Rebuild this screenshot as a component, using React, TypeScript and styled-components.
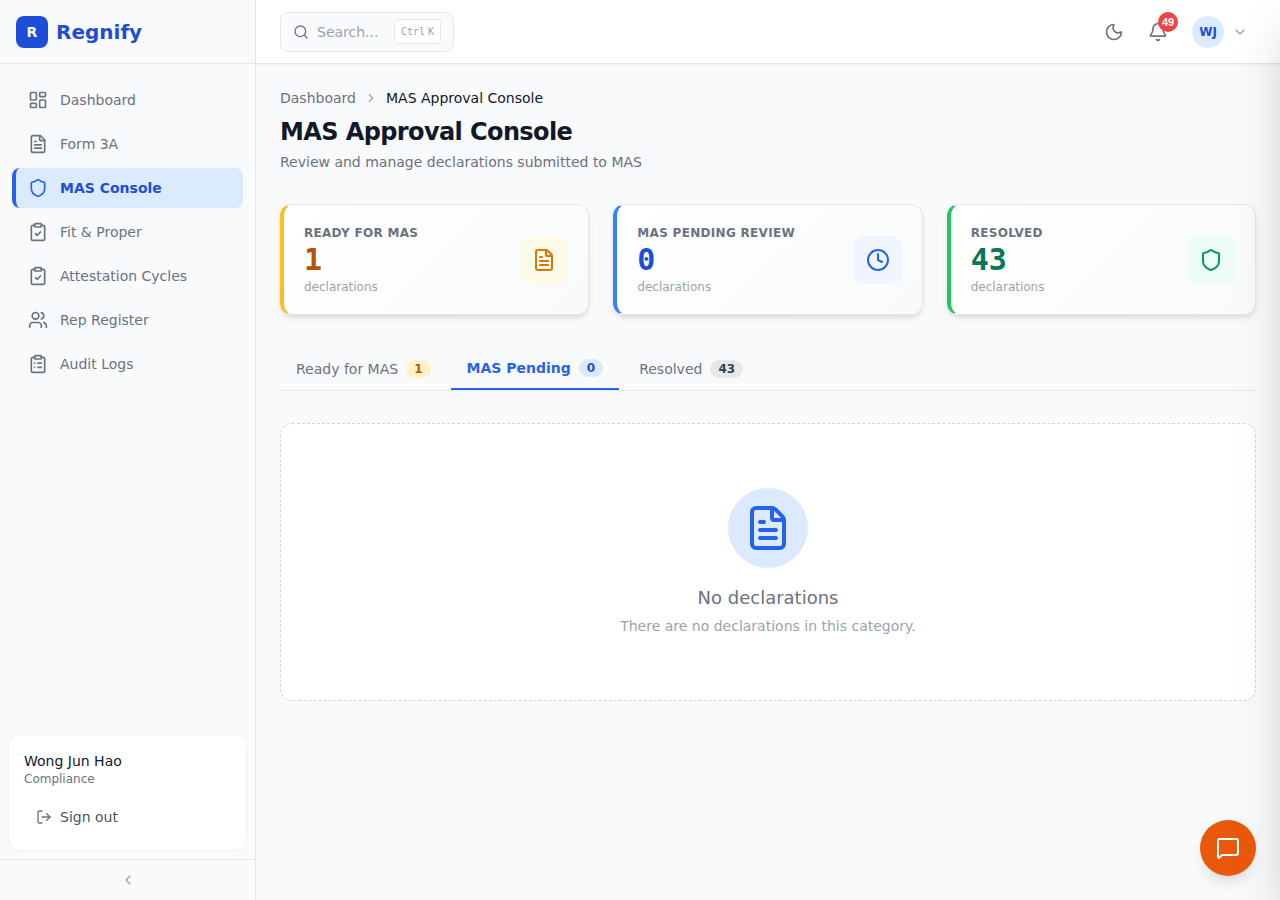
import React from "react";
import styled, { createGlobalStyle } from "styled-components";
import {
  Bell,
  ChevronDown,
  ChevronLeft,
  ChevronRight,
  ClipboardCheck,
  ClipboardList,
  Clock,
  FileText,
  LayoutDashboard,
  LogOut,
  MessageSquare,
  Moon,
  Search,
  Shield,
  Users,
} from "lucide-react";

const GlobalStyle = createGlobalStyle`
  * {
    box-sizing: border-box;
  }

  html,
  body {
    margin: 0;
    height: 100%;
    overflow: hidden;
    background: #f9fafb;
    font-family: "DejaVu Sans", sans-serif;
  }
`;

const Shell = styled.div`
  display: flex;
  width: 100%;
  height: 900px;
  overflow: hidden;
`;

const Sidebar = styled.aside`
  display: flex;
  flex-direction: column;
  flex: none;
  width: 256px;
  height: 100%;
  background: #f9fafb;
  border-right: 1px solid #e5e7eb;
`;

const Brand = styled.div`
  display: flex;
  align-items: center;
  gap: 8px;
  height: 64px;
  padding: 0 16px;
  border-bottom: 1px solid #e5e7eb;
`;

const BrandMark = styled.div`
  display: flex;
  align-items: center;
  justify-content: center;
  width: 32px;
  height: 32px;
  border-radius: 8px;
  background: #1d4ed8;
  color: #fff;
  font-size: 14px;
  font-weight: 700;
`;

const BrandName = styled.span`
  color: #1d4ed8;
  font-size: 20px;
  font-weight: 700;
`;

const Nav = styled.nav`
  display: flex;
  flex-direction: column;
  gap: 4px;
  flex: 1;
  padding: 16px 12px 0;
`;

const NavItem = styled.a<{ $active?: boolean }>`
  display: flex;
  align-items: center;
  gap: 12px;
  width: 231px;
  height: 40px;
  padding-left: ${(p) => (p.$active ? "12px" : "16px")};
  border-left: ${(p) => (p.$active ? "4px solid #2563eb" : "none")};
  border-radius: 8px;
  background: ${(p) => (p.$active ? "#dbeafe" : "transparent")};
  color: ${(p) => (p.$active ? "#1d4ed8" : "#6b7280")};
  font-size: 14px;
  font-weight: ${(p) => (p.$active ? 700 : 400)};

  svg {
    flex: none;
    width: 20px;
    height: 20px;
    color: ${(p) => (p.$active ? "#2563eb" : "#6b7280")};
  }
`;

const UserCard = styled.div`
  display: flex;
  flex-direction: column;
  height: 117px;
  margin: 0 8px 8px;
  padding: 16px 15px 15px;
  border: 1px solid #f3f4f6;
  border-radius: 12px;
  background: #fff;
`;

const UserName = styled.div`
  color: #111827;
  font-size: 14px;
  line-height: 20px;
`;

const UserRole = styled.div`
  color: #6b7280;
  font-size: 12px;
  line-height: 16px;
`;

const SignOut = styled.div`
  display: flex;
  align-items: center;
  gap: 8px;
  margin-top: 12px;
  padding: 8px 12px;
  color: #4b5563;
  font-size: 14px;
  line-height: 20px;

  svg {
    width: 16px;
    height: 16px;
    color: #6b7280;
  }
`;

const Collapse = styled.div`
  display: flex;
  align-items: center;
  justify-content: center;
  height: 41px;
  border-top: 1px solid #e5e7eb;
  color: #9ca3af;

  svg {
    width: 16px;
    height: 16px;
  }
`;

const Column = styled.div`
  display: flex;
  flex-direction: column;
  flex: 1;
  min-width: 0;
`;

const Topbar = styled.header`
  display: flex;
  align-items: center;
  justify-content: space-between;
  flex: none;
  height: 64px;
  padding: 0 24px;
  border-bottom: 1px solid #e5e7eb;
  background: #fff;
  box-shadow: 0 1px 2px rgba(0, 0, 0, 0.05);
`;

const SearchBox = styled.div`
  display: flex;
  align-items: center;
  width: 174px;
  height: 40px;
  padding: 0 12px;
  border: 1px solid #e5e7eb;
  border-radius: 8px;
  background: #f9fafb;
  color: #9ca3af;
  font-size: 14px;

  svg {
    flex: none;
    width: 16px;
    height: 16px;
    margin-right: 8px;
    color: #6b7280;
  }
`;

const Kbd = styled.kbd`
  display: flex;
  gap: 3px;
  margin-left: auto;
  height: 25px;
  padding: 0 6px;
  border: 1px solid #e5e7eb;
  border-radius: 4px;
  background: #fff;
  color: #9ca3af;
  font-family: "DejaVu Sans Mono", monospace;
  font-size: 10px;
  line-height: 23px;
`;

const TopActions = styled.div`
  display: flex;
  align-items: center;
`;

const IconButton = styled.button`
  position: relative;
  display: flex;
  align-items: center;
  justify-content: center;
  width: 36px;
  height: 36px;
  margin-right: 8px;
  padding: 0;
  border: none;
  background: none;
  color: #6b7280;

  svg {
    width: 20px;
    height: 20px;
  }
`;

const NotifyBadge = styled.span`
  position: absolute;
  top: -2px;
  right: -2px;
  min-width: 20px;
  height: 20px;
  border-radius: 10px;
  background: #ef4444;
  color: #fff;
  font-size: 11px;
  font-weight: 700;
  line-height: 20px;
  text-align: center;
`;

const Avatar = styled.div`
  display: flex;
  align-items: center;
  justify-content: center;
  width: 32px;
  height: 32px;
  margin-left: 8px;
  border-radius: 50%;
  background: #dbeafe;
  color: #1d4ed8;
  font-size: 12px;
  font-weight: 700;
`;

const Caret = styled(ChevronDown)`
  width: 16px;
  height: 16px;
  margin: 0 8px;
  color: #9ca3af;
`;

const Main = styled.main`
  flex: 1;
  padding: 24px;
`;

const Crumbs = styled.div`
  display: flex;
  align-items: center;
  height: 20px;
  color: #6b7280;
  font-size: 14px;

  svg {
    width: 14px;
    height: 14px;
    margin: 0 8px;
    color: #9ca3af;
  }
`;

const CrumbCurrent = styled.span`
  color: #111827;
`;

const Title = styled.h1`
  margin: 8px 0 0;
  color: #111827;
  font-size: 24px;
  font-weight: 700;
  letter-spacing: -0.6px;
  line-height: 32px;
`;

const Subtitle = styled.p`
  margin: 4px 0 0;
  color: #6b7280;
  font-size: 14px;
  line-height: 20px;
`;

const Stats = styled.section`
  display: grid;
  grid-template-columns: repeat(3, 1fr);
  gap: 24px;
  margin-top: 32px;
`;

const StatCard = styled.div<{ $accent: string }>`
  display: flex;
  align-items: center;
  justify-content: space-between;
  height: 111px;
  padding: 0 20px;
  border: 1px solid #e5e7eb;
  border-left: 4px solid ${(p) => p.$accent};
  border-radius: 12px;
  background: linear-gradient(135deg, #ffffff, #f9fafb);
  box-shadow: 0 4px 6px -1px rgba(0, 0, 0, 0.1), 0 2px 4px -2px rgba(0, 0, 0, 0.1);
`;

const StatLabel = styled.div`
  color: #6b7280;
  font-size: 12px;
  font-weight: 700;
  letter-spacing: 0.3px;
  line-height: 16px;
`;

const StatValue = styled.div<{ $color: string }>`
  margin: 1px 0;
  color: ${(p) => p.$color};
  font-family: "DejaVu Sans Mono", monospace;
  font-size: 30px;
  font-weight: 700;
  line-height: 36px;
`;

const StatUnit = styled.div`
  color: #9ca3af;
  font-size: 12px;
  line-height: 16px;
`;

const StatIcon = styled.div<{ $bg: string; $color: string }>`
  display: flex;
  align-items: center;
  justify-content: center;
  width: 48px;
  height: 48px;
  border-radius: 10px;
  background: ${(p) => p.$bg};
  color: ${(p) => p.$color};

  svg {
    width: 24px;
    height: 24px;
  }
`;

const Tabs = styled.div`
  display: flex;
  gap: 4px;
  height: 41px;
  margin-top: 35px;
  border-bottom: 1px solid #e5e7eb;
`;

const Tab = styled.div<{ $active?: boolean }>`
  display: flex;
  align-items: center;
  gap: 8px;
  height: 40px;
  padding: 0 16px 2px;
  border-bottom: ${(p) => (p.$active ? "2px solid #2563eb" : "none")};
  color: ${(p) => (p.$active ? "#2563eb" : "#6b7280")};
  font-size: 14px;
  font-weight: ${(p) => (p.$active ? 700 : 400)};
`;

const Count = styled.span<{ $bg: string; $color: string }>`
  min-width: 24px;
  height: 18px;
  padding: 0 8px;
  border-radius: 9px;
  background: ${(p) => p.$bg};
  color: ${(p) => p.$color};
  font-size: 12px;
  font-weight: 700;
  line-height: 18px;
  text-align: center;
`;

const Empty = styled.section`
  display: flex;
  flex-direction: column;
  align-items: center;
  height: 278px;
  margin-top: 32px;
  padding-top: 64px;
  border: 1px dashed #d1d5db;
  border-radius: 12px;
  background: #fff;
`;

const EmptyCircle = styled.div`
  display: flex;
  align-items: center;
  justify-content: center;
  width: 80px;
  height: 80px;
  border-radius: 50%;
  background: #dbeafe;
  color: #2563eb;

  svg {
    width: 48px;
    height: 48px;
  }
`;

const EmptyTitle = styled.div`
  margin-top: 16px;
  color: #6b7280;
  font-size: 18px;
  line-height: 28px;
`;

const EmptyText = styled.div`
  margin-top: 4px;
  color: #9ca3af;
  font-size: 14px;
  line-height: 20px;
`;

const ChatButton = styled.button`
  position: fixed;
  right: 24px;
  bottom: 24px;
  display: flex;
  align-items: center;
  justify-content: center;
  width: 56px;
  height: 56px;
  padding: 0;
  border: none;
  border-radius: 50%;
  background: #ea580c;
  color: #fff;
  box-shadow: 0 10px 15px -3px rgba(0, 0, 0, 0.1), 0 4px 6px -4px rgba(0, 0, 0, 0.1);

  svg {
    width: 24px;
    height: 24px;
  }
`;

// closed drawer parked past the right edge, only its shadow shows
const DrawerShadow = styled.div`
  position: fixed;
  top: 0;
  left: 100%;
  width: 400px;
  height: 100%;
  box-shadow: 0 25px 50px -12px rgba(0, 0, 0, 0.25);
  pointer-events: none;
`;

const navItems = [
  { label: "Dashboard", icon: LayoutDashboard },
  { label: "Form 3A", icon: FileText },
  { label: "MAS Console", icon: Shield, active: true },
  { label: "Fit & Proper", icon: ClipboardCheck },
  { label: "Attestation Cycles", icon: ClipboardCheck },
  { label: "Rep Register", icon: Users },
  { label: "Audit Logs", icon: ClipboardList },
];

const stats = [
  {
    label: "READY FOR MAS",
    value: "1",
    accent: "#fbbf24",
    color: "#b45309",
    iconBg: "#fffbeb",
    iconColor: "#d97706",
    icon: FileText,
  },
  {
    label: "MAS PENDING REVIEW",
    value: "0",
    accent: "#3b82f6",
    color: "#1d4ed8",
    iconBg: "#eff6ff",
    iconColor: "#2563eb",
    icon: Clock,
  },
  {
    label: "RESOLVED",
    value: "43",
    accent: "#22c55e",
    color: "#047857",
    iconBg: "#ecfdf5",
    iconColor: "#059669",
    icon: Shield,
  },
];

const tabs = [
  { label: "Ready for MAS", count: "1", bg: "#fef3c7", color: "#b45309" },
  { label: "MAS Pending", count: "0", bg: "#dbeafe", color: "#1d4ed8", active: true },
  { label: "Resolved", count: "43", bg: "#e5e7eb", color: "#374151" },
];

const App = () => {
  return (
    <Shell>
      <GlobalStyle />
      <Sidebar>
        <Brand>
          <BrandMark>R</BrandMark>
          <BrandName>Regnify</BrandName>
        </Brand>
        <Nav>
          {navItems.map((item) => (
            <NavItem key={item.label} $active={item.active}>
              <item.icon />
              {item.label}
            </NavItem>
          ))}
        </Nav>
        <UserCard>
          <UserName>Wong Jun Hao</UserName>
          <UserRole>Compliance</UserRole>
          <SignOut>
            <LogOut />
            Sign out
          </SignOut>
        </UserCard>
        <Collapse>
          <ChevronLeft />
        </Collapse>
      </Sidebar>
      <Column>
        <Topbar>
          <SearchBox>
            <Search />
            Search...
            <Kbd>
              <span>Ctrl</span>
              <span>K</span>
            </Kbd>
          </SearchBox>
          <TopActions>
            <IconButton>
              <Moon />
            </IconButton>
            <IconButton>
              <Bell />
              <NotifyBadge>49</NotifyBadge>
            </IconButton>
            <Avatar>WJ</Avatar>
            <Caret />
          </TopActions>
        </Topbar>
        <Main>
          <Crumbs>
            Dashboard
            <ChevronRight />
            <CrumbCurrent>MAS Approval Console</CrumbCurrent>
          </Crumbs>
          <Title>MAS Approval Console</Title>
          <Subtitle>Review and manage declarations submitted to MAS</Subtitle>
          <Stats>
            {stats.map((s) => (
              <StatCard key={s.label} $accent={s.accent}>
                <div>
                  <StatLabel>{s.label}</StatLabel>
                  <StatValue $color={s.color}>{s.value}</StatValue>
                  <StatUnit>declarations</StatUnit>
                </div>
                <StatIcon $bg={s.iconBg} $color={s.iconColor}>
                  <s.icon />
                </StatIcon>
              </StatCard>
            ))}
          </Stats>
          <Tabs>
            {tabs.map((t) => (
              <Tab key={t.label} $active={t.active}>
                {t.label}
                <Count $bg={t.bg} $color={t.color}>
                  {t.count}
                </Count>
              </Tab>
            ))}
          </Tabs>
          <Empty>
            <EmptyCircle>
              <FileText />
            </EmptyCircle>
            <EmptyTitle>No declarations</EmptyTitle>
            <EmptyText>There are no declarations in this category.</EmptyText>
          </Empty>
        </Main>
      </Column>
      <ChatButton>
        <MessageSquare />
      </ChatButton>
      <DrawerShadow />
    </Shell>
  );
};

export default App;
